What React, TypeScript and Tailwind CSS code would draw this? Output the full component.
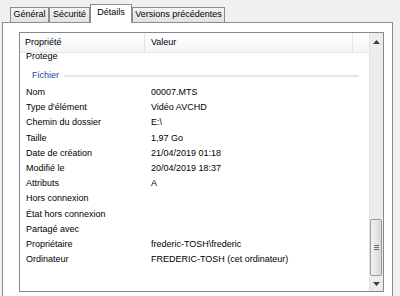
import React from 'react';

const rows: [string, string][] = [
  ['Nom', '00007.MTS'],
  ["Type d'élément", 'Vidéo AVCHD'],
  ['Chemin du dossier', 'E:\\'],
  ['Taille', '1,97 Go'],
  ['Date de création', '21/04/2019 01:18'],
  ['Modifié le', '20/04/2019 18:37'],
  ['Attributs', 'A'],
  ['Hors connexion', ''],
  ['État hors connexion', ''],
  ['Partagé avec', ''],
  ['Propriétaire', 'frederic-TOSH\\frederic'],
  ['Ordinateur', 'FREDERIC-TOSH (cet ordinateur)'],
];

function Tab({ label, width, active }: { label: string; width: string; active?: boolean }) {
  if (active) {
    return (
      <div
        className={`${width} h-[19px] mb-[-1px] relative z-10 bg-white border border-b-0 border-[#898c95] flex items-center justify-center pb-[3px]`}
      >
        {label}
      </div>
    );
  }
  return (
    <div
      className={`${width} h-[15px] border border-b-0 border-[#898c95] bg-gradient-to-b from-[#f4f4f4] to-[#e2e2e2] flex items-center justify-center`}
    >
      {label}
    </div>
  );
}

function Row({ label, value }: { label: string; value: string }) {
  return (
    <div className="flex items-center h-[15.2px] shrink-0 whitespace-nowrap">
      <div className="w-[125px] pl-[6px]">{label}</div>
      <div className="pl-[6px]">{value}</div>
    </div>
  );
}

export default function App() {
  return (
    <div className="w-[400px] h-[296px] bg-[#f0f0f0] overflow-hidden font-['Liberation_Sans',Arial,sans-serif] text-[9px] text-black">
      {/* tabs */}
      <div className="flex items-end h-[22px] pl-[10px]">
        <Tab label="Général" width="w-[39px]" />
        <Tab label="Sécurité" width="w-[41px]" />
        <Tab label="Détails" width="w-[42px]" active />
        <Tab label="Versions précédentes" width="w-[93px]" />
      </div>

      {/* panel */}
      <div className="ml-[2px] w-[391px] h-[290px] border border-[#898c95] bg-white pt-[9px] pl-[16px]">
        <div className="w-[365px] h-[260px] border border-[#828790] flex">
          <div className="flex-1 flex flex-col min-w-0">
            {/* header */}
            <div className="h-[20px] shrink-0 flex bg-gradient-to-b from-white to-[#f4f5f7] border-b border-[#e5e5e5]">
              <div className="w-[125px] pl-[5px] pt-[1px] flex items-center border-r border-[#e3e4e6]">Propriété</div>
              <div className="w-[208px] pl-[6px] pt-[1px] flex items-center border-r border-[#e3e4e6]">Valeur</div>
            </div>
            {/* body */}
            <div className="flex-1 overflow-hidden flex flex-col">
              <div className="-mt-[4px]">
                <Row label="Protege" value="" />
              </div>
              <div className="mt-[2px] h-[19px] shrink-0 flex items-center">
                <span className="pl-[12px] text-[#2348a8]">Fichier</span>
                <div className="flex-1 h-[2px] bg-[#e0e6f3] ml-[5px] mr-[10px]" />
              </div>
              {rows.map(([l, v]) => (
                <Row key={l} label={l} value={v} />
              ))}
            </div>
          </div>

          {/* scrollbar */}
          <div className="w-[14px] shrink-0 flex flex-col bg-[#ececec] border-l border-[#e2e2e2]">
            <div className="h-[17px] flex items-center justify-center">
              <svg width="7" height="4" viewBox="0 0 7 4">
                <path d="M3.5 0 L7 4 L0 4 Z" fill="#3c3c3c" />
              </svg>
            </div>
            <div className="flex-1" />
            <div className="h-[57px] mr-px rounded-[2px] border border-[#9a9a9a] bg-gradient-to-r from-[#f3f3f3] to-[#d8d8d8] flex flex-col items-center justify-center gap-[1px]">
              <div className="w-[5px] h-px bg-[#6e6e6e]" />
              <div className="w-[5px] h-px bg-[#6e6e6e]" />
              <div className="w-[5px] h-px bg-[#6e6e6e]" />
            </div>
            <div className="h-[15px] flex items-center justify-center">
              <svg width="7" height="4" viewBox="0 0 7 4">
                <path d="M0 0 L7 0 L3.5 4 Z" fill="#3c3c3c" />
              </svg>
            </div>
          </div>
        </div>
      </div>
    </div>
  );
}
